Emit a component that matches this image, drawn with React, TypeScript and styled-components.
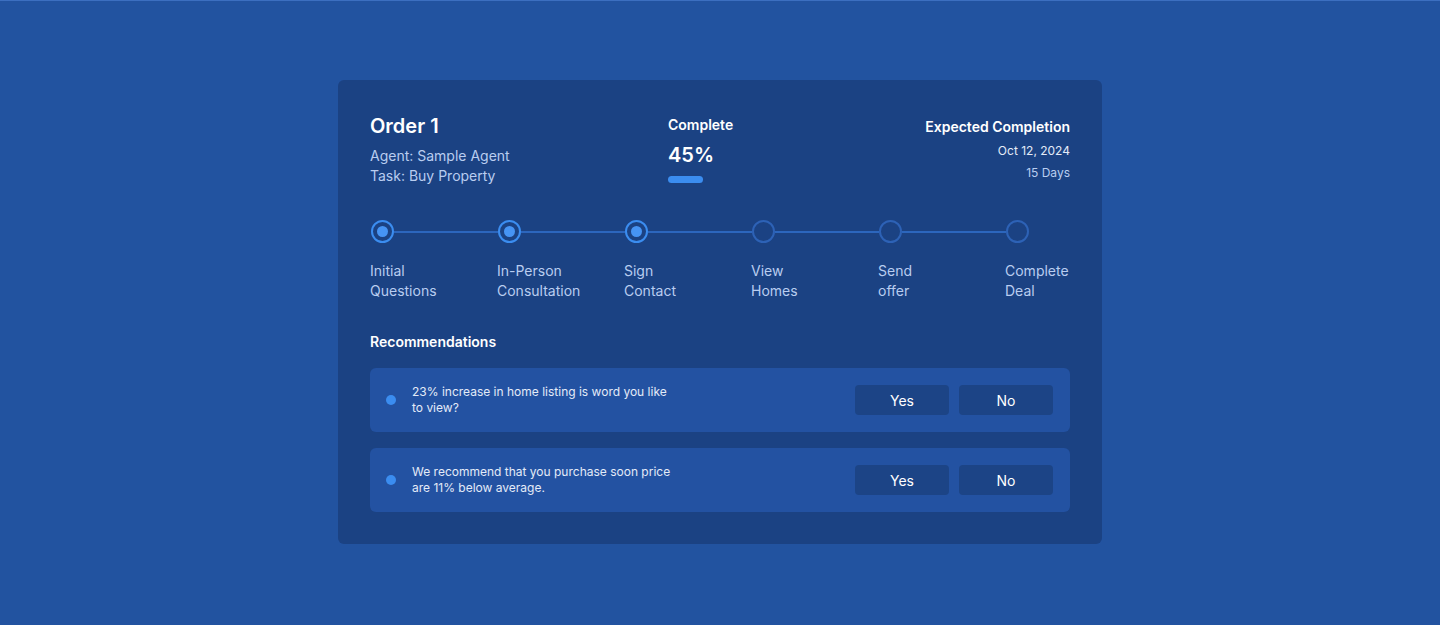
import React from "react"
import styled, { createGlobalStyle } from "styled-components"

const GlobalStyle = createGlobalStyle`
  html, body {
    margin: 0;
    padding: 0;
    background: #2253a0;
    font-family: Inter, "Noto Sans", sans-serif;
    -webkit-font-smoothing: antialiased;
  }
  * { box-sizing: border-box; }
`

const Page = styled.div`
  min-height: 625px;
  border-top: 1px solid #3c6fc0;
  display: flex;
  justify-content: center;
  align-items: flex-start;
  padding-top: 79px;
`

const Card = styled.div`
  width: 764px;
  background: #1b4283;
  border-radius: 6px;
  padding: 32px;
  color: #ffffff;
`

const Header = styled.div`
  display: grid;
  grid-template-columns: 298px auto 1fr;
  align-items: start;
`

const Title = styled.h1`
  margin: 0 0 6px;
  font-size: 20px;
  line-height: 28px;
  font-weight: 600;
`

const Meta = styled.p`
  margin: 0;
  font-size: 14px;
  line-height: 20px;
  color: #b9cdf0;
`

const Progress = styled.div`
  padding-top: 3px;
  display: flex;
  flex-direction: column;
`

const Label = styled.span`
  font-size: 14px;
  line-height: 20px;
  font-weight: 600;
`

const Percent = styled.span`
  margin-top: 6px;
  font-size: 20px;
  line-height: 28px;
  font-weight: 600;
`

const Bar = styled.div`
  margin-top: 7px;
  width: 35px;
  height: 7px;
  border-radius: 4px;
  background: #3b8df0;
`

const Expected = styled.div`
  padding-top: 5px;
  display: flex;
  flex-direction: column;
  align-items: flex-end;
`

const Small = styled.span<{ $dim?: boolean }>`
  margin-top: ${(p) => (p.$dim ? "2px" : "4px")};
  font-size: 12px;
  line-height: 20px;
  color: ${(p) => (p.$dim ? "#b9cdf0" : "#e3ebf8")};
`

const Track = styled.div`
  margin-top: 34px;
  display: flex;
  align-items: center;
  padding-left: 1px;
  padding-right: 41px;
`

const Dot = styled.div<{ $done: boolean }>`
  width: 23px;
  height: 23px;
  flex: none;
  border-radius: 50%;
  border: 2px solid ${(p) => (p.$done ? "#3b8df0" : "#2d62b6")};
  display: flex;
  align-items: center;
  justify-content: center;

  &::before {
    content: "";
    display: ${(p) => (p.$done ? "block" : "none")};
    width: 11px;
    height: 11px;
    border-radius: 50%;
    background: #4694f4;
  }
`

const Line = styled.div`
  flex: 1;
  height: 2px;
  background: #2c66bd;
`

const Steps = styled.div`
  margin-top: 18px;
  display: flex;
  justify-content: space-between;
`

const StepLabel = styled.span`
  width: 65px;
  font-size: 14px;
  line-height: 20px;
  color: #b9cdf0;
  white-space: nowrap;
`

const SectionTitle = styled.h2`
  margin: 31px 0 16px;
  font-size: 14px;
  line-height: 20px;
  font-weight: 600;
`

const List = styled.div`
  display: flex;
  flex-direction: column;
  gap: 16px;
`

const Row = styled.div`
  height: 64px;
  background: #2352a2;
  border-radius: 6px;
  display: flex;
  align-items: center;
  padding: 0 17px 0 16px;
`

const Bullet = styled.span`
  width: 10px;
  height: 10px;
  border-radius: 50%;
  background: #3b8df0;
  flex: none;
  margin-right: 16px;
`

const Text = styled.p`
  margin: 0;
  width: 265px;
  font-size: 12px;
  line-height: 16px;
  color: #e3ebf8;
`

const Actions = styled.div`
  margin-left: auto;
  display: flex;
  gap: 10px;
`

const Button = styled.button`
  width: 94px;
  height: 30px;
  border: none;
  border-radius: 4px;
  background: #1c4486;
  color: #ffffff;
  font-family: inherit;
  font-size: 14px;
  cursor: pointer;
`

const steps = [
  { label: ["Initial", "Questions"], done: true },
  { label: ["In-Person", "Consultation"], done: true },
  { label: ["Sign", "Contact"], done: true },
  { label: ["View", "Homes"], done: false },
  { label: ["Send", "offer"], done: false },
  { label: ["Complete", "Deal"], done: false },
]

const recommendations = [
  "23% increase in home listing is word you like to view?",
  "We recommend that you purchase soon price are 11% below average.",
]

export default function App() {
  return (
    <>
      <GlobalStyle />
      <Page>
        <Card>
          <Header>
            <div>
              <Title>Order 1</Title>
              <Meta>Agent: Sample Agent</Meta>
              <Meta>Task: Buy Property</Meta>
            </div>
            <Progress>
              <Label>Complete</Label>
              <Percent>45%</Percent>
              <Bar />
            </Progress>
            <Expected>
              <Label>Expected Completion</Label>
              <Small>Oct 12, 2024</Small>
              <Small $dim>15 Days</Small>
            </Expected>
          </Header>

          <Track>
            {steps.map((s, i) => (
              <React.Fragment key={i}>
                {i > 0 && <Line />}
                <Dot $done={s.done} />
              </React.Fragment>
            ))}
          </Track>
          <Steps>
            {steps.map((s, i) => (
              <StepLabel key={i}>
                {s.label[0]}
                <br />
                {s.label[1]}
              </StepLabel>
            ))}
          </Steps>

          <SectionTitle>Recommendations</SectionTitle>
          <List>
            {recommendations.map((r, i) => (
              <Row key={i}>
                <Bullet />
                <Text>{r}</Text>
                <Actions>
                  <Button>Yes</Button>
                  <Button>No</Button>
                </Actions>
              </Row>
            ))}
          </List>
        </Card>
      </Page>
    </>
  )
}
